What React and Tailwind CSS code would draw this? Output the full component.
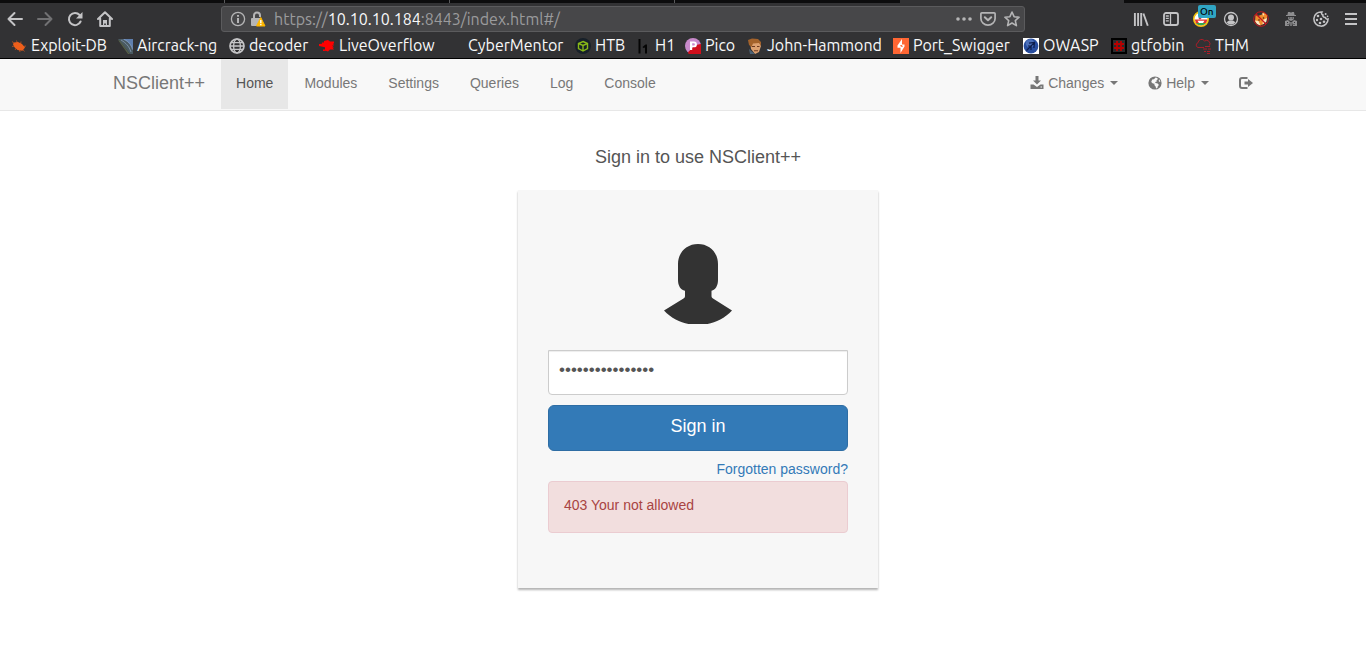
import React, { useState } from "react";

const svg = (size, viewBox, children, extra = {}) => (
  <svg width={size} height={size} viewBox={viewBox} aria-hidden="true" className="block shrink-0" {...extra}>
    {children}
  </svg>
);

const stroke = { fill: "none", stroke: "currentColor", strokeWidth: 2, strokeLinecap: "round", strokeLinejoin: "round" };

const BackIcon = () => svg(16, "0 0 16 16", <path {...stroke} d="M15 8H1.500M7.500 2l-6 6 6 6" />);
const ForwardIcon = () => svg(16, "0 0 16 16", <path {...stroke} d="M1 8h13.500M8.500 2l6 6-6 6" />);
const ReloadIcon = () =>
  svg(16, "0 0 16 16", (
    <>
      <path {...stroke} d="M13.6 10.5A6.1 6.1 0 1 1 12.6 4" />
      <path fill="currentColor" d="M15.5 1v6.5H9z" />
    </>
  ));
const HomeIcon = () =>
  svg(16, "0 0 16 16", (
    <>
      <path {...stroke} d="M1 8l7-6.8L15 8M3.2 7.5V15h9.6V7.5" />
      <path fill="currentColor" d="M6 9h4v6H8.8v-2.5H7.2V15H6z" />
    </>
  ));
const InfoIcon = () =>
  svg(16, "0 0 16 16", (
    <>
      <circle cx="8" cy="8" r="6.6" fill="none" stroke="currentColor" strokeWidth="1.3" />
      <path fill="currentColor" d="M7 4h2v1.8H7zM7 7h2v5H7z" />
    </>
  ));
const LockWarningIcon = () =>
  svg(16, "0 0 16 16", (
    <>
      <path fill="none" stroke="#b5b5b6" strokeWidth="2" d="M4 8V4.6a3 3 0 0 1 6 0V6" />
      <rect x="1" y="7" width="10" height="8" rx="1" fill="#b5b5b6" />
      <path fill="#ffb800" stroke="#ffb800" strokeWidth="1" strokeLinejoin="round" d="M10.800 6.500 15 15H6.500z" />
      <path fill="#fff" d="M10.100 9h1.400v3.2h-1.400zM10.100 13h1.400v1.3h-1.400z" />
    </>
  ));
const DotsIcon = () =>
  svg(16, "0 0 16 16", (
    <g fill="currentColor">
      <circle cx="2" cy="8" r="1.8" />
      <circle cx="8" cy="8" r="1.8" />
      <circle cx="14" cy="8" r="1.8" />
    </g>
  ));
const PocketIcon = () =>
  svg(16, "0 0 16 16", (
    <>
      <path {...stroke} strokeWidth="1.7" d="M1.8 1.9h12.4a.9.9 0 0 1 .9.9v4.6a7.1 6.8 0 0 1-14.2 0V2.8a.9.9 0 0 1 .9-.9z" />
      <path {...stroke} d="M4.8 6.2 8 9.2l3.2-3" />
    </>
  ));
const StarIcon = () =>
  svg(16, "0 0 16 16", (
    <path {...stroke} strokeWidth="1.6" d="m8 1 2.1 4.7 5 .5-3.8 3.4 1.1 5L8 12l-4.4 2.6 1.1-5L.9 6.2l5-.5z" />
  ));

const LibraryIcon = () =>
  svg(16, "0 0 16 16", <path fill="none" stroke="currentColor" strokeWidth="1.9" d="M1.9 2v13M5.1 2v13M8.2 2v13M10.4 2.5l4.4 12.2" />);
const SidebarIcon = () =>
  svg(16, "0 0 16 16", (
    <>
      <rect x="1" y="2" width="14" height="12" rx="2" fill="none" stroke="currentColor" strokeWidth="1.8" />
      <path d="M7.5 2v12M2.8 5h3M2.8 7.4h3M2.8 9.8h3" stroke="currentColor" strokeWidth="1.3" />
    </>
  ));
const FaceIcon = () =>
  svg(16, "0 0 16 16", (
    <>
      <circle cx="8" cy="8" r="7.2" fill="#fff" stroke="#f4c20d" strokeWidth="1.6" />
      <path fill="#e03030" d="M1.8 8.5h12.4A6.5 6.5 0 0 1 3 12.2z" />
      <path fill="#2fa84f" d="M3 12h10a6.5 6.5 0 0 1-10 0z" />
      <path fill="#fff" d="M4.5 9.8h7L10 12H6z" />
      <circle cx="7" cy="7" r="1.4" fill="#c23c50" />
    </>
  ));
const AccountIcon = () =>
  svg(16, "0 0 16 16", (
    <>
      <circle cx="8" cy="8" r="6.5" fill="none" stroke="currentColor" strokeWidth="1.3" />
      <circle cx="8" cy="6.4" r="3" fill="currentColor" />
      <path fill="currentColor" d="M3.5 11.2 6 9.6h4l2.5 1.6a5.4 5.4 0 0 1-9 0z" />
    </>
  ));
const FoxBlockedIcon = () =>
  svg(16, "0 0 16 16", (
    <>
      <path fill="#f08c2c" d="M2.500 4 5 5l4-1.500L10 1l2 1.500L14.500 4l-1 5-3 4-3.500 1.500L2 11z" />
      <path fill="#fbe6c4" d="m2 9.500 3.500.5 2 4.500L4 13zM10 9l4-2-.8 4L9.500 13.500zM9.500 2l2 1-1.500 2z" />
      <circle cx="6" cy="9" r=".8" fill="#442115" />
      <circle cx="10.500" cy="7" r=".8" fill="#442115" />
      <circle cx="8" cy="8" r="7.300" fill="none" stroke="#c5161d" strokeWidth="1" />
      <path d="m3 3 10 10" stroke="#c5161d" strokeWidth="1.3" />
    </>
  ));
const SpyIcon = () =>
  svg(16, "0 0 16 16", (
    <>
      <path fill="currentColor" d="M5 1h2l1 .8L9 1h2l.6 3H13v1H3V4h1.400zM5 6h6v2L9 9.800H7L5 8zM2 10l3-1 2 2-1 4H2zM14 10l-3-1-2 2 1 4h4zM7.300 11h1.400v4H7.300z" />
      <path fill="#323234" d="M5.600 6.400h1.800v1H5.600zM8.600 6.400h1.800v1H8.600zM4 11h1v1H4zM11 11h1v1h-1zM4.500 13h1v1h-1zM10.500 13h1v1h-1z" />
    </>
  ));
const CookieIcon = () =>
  svg(16, "0 0 16 16", (
    <>
      <path fill="none" stroke="currentColor" strokeWidth="1.500" d="M9 1A7.100 7.100 0 1 0 15.100 8c-1.400.5-2.500-.2-2.600-1.500C10.600 6.700 9.600 5.400 10 4 8.500 3.600 8.200 2 9 1z" />
      <g fill="currentColor">
        <circle cx="5" cy="5" r="1.300" />
        <circle cx="4" cy="9" r="1.200" />
        <circle cx="8" cy="8" r="1.300" />
        <circle cx="7" cy="12" r="1.300" />
        <circle cx="11" cy="10.700" r="1.300" />
        <circle cx="12.600" cy="3" r="1" />
        <circle cx="14.600" cy="5.400" r=".8" />
      </g>
    </>
  ));
const MenuIcon = () => svg(16, "0 0 16 16", <path stroke="currentColor" strokeWidth="2" d="M2 3h12M2 8h12M2 13h12" />);

const BugIcon = () =>
  svg(16, "0 0 16 16", (
    <>
      <path fill="#ee5f1b" d="M2 6.200 3 4.500l4-.5 4 2 3 3.500-2.600 3.300-4.900-.8-3-2.800z" />
      <path fill="none" stroke="#ee5f1b" strokeWidth=".6" d="M1 3.500 4 6M5.500 2.500l1 3M10 3.500l-.5 3M1 8.500l3-.6M4 12l1.400-2M9 14 8.300 11M13.500 13.500l-2.700-3M15 8l-3 .5" />
    </>
  ));
const AircrackIcon = () =>
  svg(16, "0 0 16 16", (
    <>
      <path fill="#4a5a61" d="M1 1h15v15h-3z" />
      <path fill="#566048" d="m3 3 9 12 1 1h-2L1 2z" />
      <path fill="#5f7fae" d="M5 1h11v11C14 7 11 3 5 1z" />
      <path fill="none" stroke="#8fa5c2" strokeWidth=".7" d="M7 1.500c5 2 7 5 8.500 10M4 2c5 3 8 6 10 12" />
    </>
  ));
const GlobeIcon = () =>
  svg(16, "0 0 16 16", (
    <g fill="none" stroke="#c4c4c6" strokeWidth="1.3">
      <circle cx="8" cy="8" r="7" strokeWidth="1.7" />
      <ellipse cx="8" cy="8" rx="3.4" ry="7" />
      <path d="M1 8h14M2 4.6h12M2 11.4h12" />
    </g>
  ));
const RedBlobIcon = () =>
  svg(16, "0 0 16 16", <path fill="#f00" d="M5 3 9 2l2 1.400h4v2h-1l1 2h-2l2 2.200h-1.600l1.600 2h-4L9 13.600 7 12.800 4 13V11.500h2V9.200L0 8V6l3-.3V4.600h2z" />);
const BlankIcon = () => svg(16, "0 0 16 16", null);
const CubeIcon = () =>
  svg(16, "0 0 16 16", (
    <>
      <circle cx="8" cy="8" r="8" fill="#172029" />
      <path fill="none" stroke="#88b818" strokeWidth="1.4" d="m8 3.500 4.500 2v5L8 13l-4.500-2.500v-5zM3.500 5.500 8 7.500l4.500-2M8 7.500V13" />
    </>
  ));
const HackerOneIcon = () => svg(16, "0 0 16 16", <path fill="#050505" d="M3.500 1h2v14.500h-2zM7.500 9l3-2.500H12v9h-2V9.500l-1.500.5z" />);
const PicoIcon = () =>
  svg(16, "0 0 16 16", (
    <>
      <circle cx="8" cy="8" r="8" fill="#c88acb" />
      <path fill="#d00f1b" d="M15.700 6A8 8 0 1 1 3 14.200L8 9l3-2z" />
      <path fill="#fff" fillRule="evenodd" d="M5 3.500h4a2.900 2.900 0 0 1 0 5.800H7.200V12H5zM7.200 5.300v2.200h1.600a1.100 1.100 0 0 0 0-2.200z" />
    </>
  ));
const PortraitIcon = () =>
  svg(16, "0 0 16 16", (
    <>
      <path fill="#dca070" d="M3 3h9l2 5-2 6-4 2-4-5z" />
      <path fill="#a3622b" d="M1 2 5 .4l6 .5L14 4v4l-2-3-6 .5L4.500 9 2 7z" />
      <path fill="#6d3a21" d="M5 8h3v1H5zM10 8h2.500v1H10zM7 12.300h4v1H7z" />
      <path fill="#4d6275" d="m2 11 6 5H3z" />
    </>
  ));
const BoltIcon = () =>
  svg(16, "0 0 16 16", (
    <>
      <path fill="#ff6633" d="M0 0h16v16H0z" />
      <path fill="#fff" d="M9 1v5.500h2.500v2L7.500 15V9.800H4.500V7.500z" />
      <path fill="#ff6633" d="M7 7.200 8 8.800h2L8.800 7z" />
    </>
  ));
const WaspIcon = () =>
  svg(16, "0 0 16 16", (
    <>
      <path fill="#fff" d="M0 0h16v16H0z" />
      <circle cx="8" cy="8" r="7.400" fill="#274d9f" />
      <circle cx="7" cy="5.400" r="4.200" fill="#6689cc" opacity=".6" />
      <path fill="none" stroke="#0c1d4d" strokeWidth="1.200" d="m3.500 12.500 8-8M6 5.200l5.500-.7-.6 5.500M5 8h4M8 8v4" />
    </>
  ));
const HashIcon = () =>
  svg(16, "0 0 16 16", (
    <>
      <path fill="#2b2b2d" stroke="#000" strokeWidth="2" d="M1 1h14v14H1z" />
      <path stroke="#b80000" strokeWidth="1.800" d="M6 3v10M10 3v10M3 6h10M3 10h10" />
    </>
  ));
const CloudIcon = () =>
  svg(16, "0 0 16 16", (
    <path fill="none" stroke="#a91e29" strokeWidth="1" d="M8 9.500H3A2.500 2.500 0 0 1 3 4.700 3.600 3.600 0 0 1 9.600 3 3.400 3.400 0 0 1 14.500 7.500M6 9.500h3M10 8.500h5M8 11h4M13 11h3M9 13.500h2M12 13.500h3M12 15.500h3" />
  ));

const bookmarks = [
  ["Exploit-DB", BugIcon],
  ["Aircrack-ng", AircrackIcon],
  ["decoder", GlobeIcon],
  ["LiveOverflow", RedBlobIcon],
  ["CyberMentor", BlankIcon],
  ["HTB", CubeIcon],
  ["H1", HackerOneIcon],
  ["Pico", PicoIcon],
  ["John-Hammond", PortraitIcon],
  ["Port_Swigger", BoltIcon],
  ["OWASP", WaspIcon],
  ["gtfobin", HashIcon],
  ["THM", CloudIcon],
];

function ToolButton({ label, className = "", children }) {
  return (
    <button type="button" aria-label={label} className={`relative flex h-8 w-[30px] items-center justify-center ${className}`}>
      {children}
    </button>
  );
}

function TabStrip() {
  return (
    <div className="flex h-[3px] bg-[#0c0c0d]">
      <div className="w-[225px] border-r border-[#5a5a5c]" />
      <div className="w-[225px] border-r border-[#5a5a5c]" />
      <div className="w-[225px] border-r border-[#5a5a5c]" />
      <div className="w-[225px]" />
      <div className="w-[224px] bg-[#323234]" />
    </div>
  );
}

function BrowserChrome() {
  return (
    <header className="border-b border-black bg-[#323234] font-['Ubuntu','Noto_Sans',sans-serif] text-[#c4c4c6]">
      <TabStrip />
      <div className="flex h-8 items-center">
        <ToolButton label="Back"><BackIcon /></ToolButton>
        <ToolButton label="Forward" className="text-[#717173]"><ForwardIcon /></ToolButton>
        <ToolButton label="Reload"><ReloadIcon /></ToolButton>
        <ToolButton label="Home"><HomeIcon /></ToolButton>
        <div className="mx-[101px] flex h-[26px] min-w-0 flex-1 items-center rounded-[3px] border border-[#5b5b5d] bg-[#474749] px-2 text-[#b5b5b6]">
          <InfoIcon />
          <span className="ml-1"><LockWarningIcon /></span>
          <div className="ml-2 flex-1 truncate text-base leading-5 text-[#9b9b9d]">
            https://<span className="text-[#f9f9fa]">10.10.10.184</span>:8443/index.html#/
          </div>
          <div className="-mr-[4px] flex gap-2">
            <DotsIcon />
            <PocketIcon />
            <StarIcon />
          </div>
        </div>
        <ToolButton label="Library"><LibraryIcon /></ToolButton>
        <ToolButton label="Sidebars"><SidebarIcon /></ToolButton>
        <ToolButton label="Extension">
          <FaceIcon />
          <span className="absolute top-[2px] left-[12px] rounded-[2px] bg-[#30a5c4] px-[2px] text-[10px] leading-[13px] font-medium text-black">On</span>
        </ToolButton>
        <ToolButton label="Account"><AccountIcon /></ToolButton>
        <ToolButton label="Proxy"><FoxBlockedIcon /></ToolButton>
        <ToolButton label="User agent" className="text-[#8e8e90]"><SpyIcon /></ToolButton>
        <ToolButton label="Cookies"><CookieIcon /></ToolButton>
        <ToolButton label="Menu"><MenuIcon /></ToolButton>
      </div>
      <nav aria-label="Bookmarks" className="grid h-[23px] grid-cols-[106px_112px_90px_129px_127px_60px_50px_62px_146px_130px_88px_84px_auto] items-start pl-[11px] text-base leading-[21px] text-[#f9f9fa]">
        {bookmarks.map(([name, Icon]) => (
          <a key={name} href="#/" className="flex items-center gap-1 whitespace-nowrap">
            <Icon />
            {name}
          </a>
        ))}
      </nav>
    </header>
  );
}

const Caret = () => (
  <svg width="8" height="4" viewBox="0 0 8 4" aria-hidden="true" className="ml-[6px] inline-block align-middle">
    <path fill="currentColor" d="M0 0h8L4 4z" />
  </svg>
);

const SaveIcon = () =>
  svg(14, "0 0 14 14", (
    <>
      <path fill="currentColor" d="M5.500 0h3v4.500H11L7 8.500l-4-4h2.500z" />
      <path fill="currentColor" fillRule="evenodd" d="M.5 8.500h3L7 11l3.500-2.500h3V13H.5zM10.500 10.500v1h1.500v-1z" />
    </>
  ));
const EarthIcon = () =>
  svg(14, "0 0 14 14", (
    <>
      <circle cx="7" cy="7" r="6.600" fill="currentColor" />
      <path fill="#f8f8f8" d="M7.600 1.500 9.300 2l.5 1.300-1.300 1 .3 1.200-1.600.4.2 1.200 2.300.3 1.200 1.700-1.100 1.100-.4 1.900-1.300.3-.5-2-1.300-1.400.3-1.200-1.700-.4L3.200 5.900l1-2.500 1.700-.2zM11.100 3.200l1.300 2-.7.7-1-1z" />
    </>
  ));
const LogOutIcon = () =>
  svg(14, "0 0 14 14", (
    <>
      <path fill="none" stroke="currentColor" strokeWidth="2" d="M8.500 2H3a2 2 0 0 0-2 2v6a2 2 0 0 0 2 2h5.500" />
      <path fill="currentColor" d="M5.500 5.500H9V3l5 4-5 4V8.500H5.500z" />
    </>
  ));

function Navbar() {
  const links = ["Home", "Modules", "Settings", "Queries", "Log", "Console"];
  const item = "flex h-[50px] items-center px-[15px] pb-[2px]";
  return (
    <nav aria-label="Main" className="border-b border-[#e7e7e7] bg-[#f8f8f8] text-sm text-[#777]">
      <div className="mx-auto flex h-[51px] max-w-[1170px] items-start gap-px">
        <a href="#/" className={`${item} text-lg`}>NSClient++</a>
        {links.map((name) => (
          <a
            key={name}
            href="#/"
            aria-current={name === "Home" ? "page" : undefined}
            className={`${item} ${name === "Home" ? "bg-[#e7e7e7] text-[#555]" : ""}`}
          >
            {name}
          </a>
        ))}
        <div className="ml-auto flex">
          <button type="button" className={item}>
            <span className="mr-1"><SaveIcon /></span>Changes<Caret />
          </button>
          <button type="button" className={item}>
            <span className="mr-1"><EarthIcon /></span>Help<Caret />
          </button>
          <button type="button" aria-label="Log out" className={item}><LogOutIcon /></button>
        </div>
      </div>
    </nav>
  );
}

function UserIcon() {
  return (
    <svg width="68" height="80" viewBox="0 0 68 80" aria-hidden="true" className="mx-auto block">
      <path
        fill="#333"
        d="M34 0C45.500 0 54 8.500 54 20V36C54 41.500 51.500 46 47.500 46.700V52C47.500 53.200 48 53.800 49 54.500L68 66.500C61 74 52 78.500 43.500 80H24.500C16 78.500 7 74 0 66.500L19.500 54.500C20.500 53.800 21 53.200 21 52V46.700C16.500 46 14 41.500 14 36V20C14 8.500 22.500 0 34 0Z"
      />
    </svg>
  );
}

function SignIn() {
  const [password, setPassword] = useState("correcthorsebatt");
  return (
    <main className="flex flex-col items-center pt-9 pb-10 pl-[30px]">
      <h1 className="text-lg leading-5 text-[#555]">Sign in to use NSClient++</h1>
      <form
        onSubmit={(e) => e.preventDefault()}
        className="mt-[23px] w-full max-w-[360px] bg-[#f7f7f7] px-[30px] pt-[54px] pb-[55px] shadow-[0_2px_2px_rgba(0,0,0,0.3)]"
      >
        <UserIcon />
        <input
          aria-label="Password"
          type="password"
          value={password}
          onChange={(e) => setPassword(e.target.value)}
          className="mt-[26px] block h-[45px] w-full rounded-b-[4px] border border-[#ccc] bg-white px-[10px] pb-[6px] text-[17px] text-[#555] shadow-[inset_0_1px_1px_rgba(0,0,0,0.075)] outline-none"
        />
        <button type="submit" className="mt-[10px] block h-[46px] w-full rounded-[6px] border border-[#2e6da4] bg-[#337ab7] pb-1 text-lg text-white">
          Sign in
        </button>
        <div className="mt-2 text-right text-sm leading-5 text-[#337ab7]">
          <a href="#/">Forgotten password?</a>
        </div>
        <div role="alert" className="mt-[2px] h-[52px] rounded-[4px] border border-[#ebccd1] bg-[#f2dede] px-[15px] pt-[13px] text-sm leading-5 text-[#a94442]">
          403 Your not allowed
        </div>
      </form>
    </main>
  );
}

export default function App() {
  return (
    <div className="min-h-screen bg-white font-['Liberation_Sans',Arial,sans-serif]">
      <BrowserChrome />
      <Navbar />
      <SignIn />
    </div>
  );
}
